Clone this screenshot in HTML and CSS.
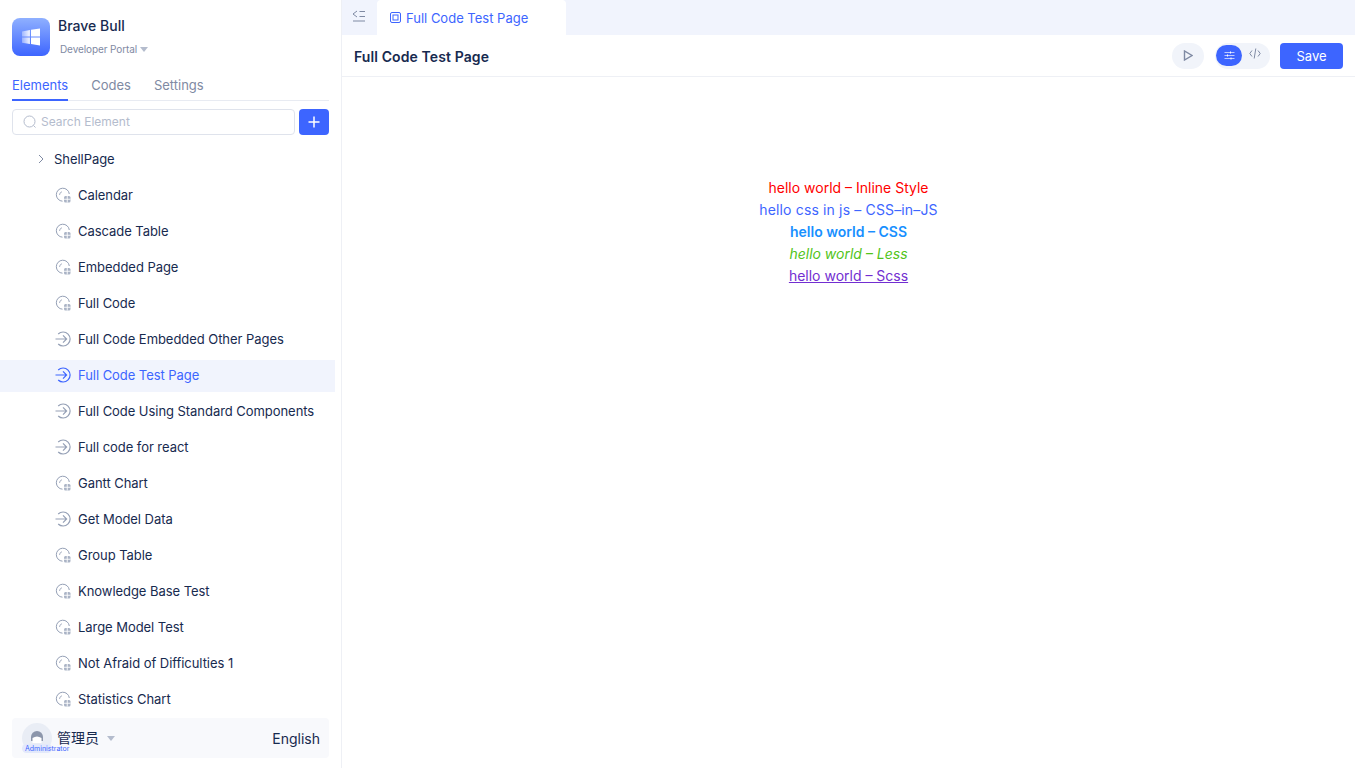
FILE: index.html
```html
<!DOCTYPE html>
<html lang="en">
<head>
    <meta charset="UTF-8">
    <title>Full Code Test Page</title>
    <link rel="stylesheet" href="styles.css">
</head>
<body>
<svg class="defs" width="0" height="0">
    <symbol id="i-page" viewBox="0 0 16 16">
        <path d="M7.500 14.200A6.500 6.500 0 1 1 14.300 7" fill="none" stroke="currentColor"/>
        <path d="M4.500 8A3.500 3.500 0 0 1 7 4.700" fill="none" stroke="currentColor" stroke-width=".8"/>
        <rect x="9" y="9" width="6.500" height="6.500" rx="1.500" fill="currentColor" opacity=".8"/>
        <path d="M12.250 9v6.500M9 12.250h6.500" stroke="#fff" stroke-width=".9"/>
    </symbol>
    <symbol id="i-arrow" viewBox="0 0 16 16">
        <path d="M3.200 3A7 7 0 1 1 3.200 13" fill="none" stroke="currentColor" stroke-width="1.200"/>
        <path d="M.5 8h11M8 4.400 11.600 8 8 11.600" fill="none" stroke="currentColor" stroke-width="1.200"/>
    </symbol>
</svg>

<div class="app">
    <aside class="sidebar">
        <div class="brand">
            <div class="logo">
                <svg width="20" height="20" viewBox="0 0 20 20">
                    <path d="M1 4.400 8.900 3v6.400H1zM10 2.800 19 1.500v7.900h-9zM1 10.500h7.900V17L1 15.700zM10 10.500h9v8l-9-1.400z" fill="url(#win)"/>
                    <defs>
                        <linearGradient id="win" x1="0" x2="1" y1="0" y2="0">
                            <stop offset="0" stop-color="#fff" stop-opacity=".35"/>
                            <stop offset=".5" stop-color="#fff"/>
                        </linearGradient>
                    </defs>
                </svg>
            </div>
            <div class="brand-text">
                <div class="brand-name">Brave Bull</div>
                <div class="brand-sub">Developer Portal <span class="caret"></span></div>
            </div>
        </div>

        <div class="tabs">
            <span class="tab active">Elements</span>
            <span class="tab">Codes</span>
            <span class="tab">Settings</span>
        </div>

        <div class="search-row">
            <div class="search">
                <svg width="14" height="14" viewBox="0 0 14 14"><circle cx="6.500" cy="6.500" r="5.500" fill="none" stroke="#b4bccd"/><path d="m10.500 10.500 2 2" stroke="#b4bccd"/></svg>
                <span>Search Element</span>
            </div>
            <button class="add-btn">
                <svg width="12" height="12" viewBox="0 0 12 12"><path d="M6 .5v11M.5 6h11" stroke="#fff" stroke-width="1.500"/></svg>
            </button>
        </div>

        <div class="tree">
            <div class="row folder">
                <svg class="chevron" width="8" height="10" viewBox="0 0 8 10"><path d="m2 1 4 4-4 4" fill="none" stroke="#7f8aa3"/></svg>
                ShellPage
            </div>
            <div class="row"><svg class="ico"><use href="#i-page"/></svg>Calendar</div>
            <div class="row"><svg class="ico"><use href="#i-page"/></svg>Cascade Table</div>
            <div class="row"><svg class="ico"><use href="#i-page"/></svg>Embedded Page</div>
            <div class="row"><svg class="ico"><use href="#i-page"/></svg>Full Code</div>
            <div class="row"><svg class="ico"><use href="#i-arrow"/></svg>Full Code Embedded Other Pages</div>
            <div class="row selected"><svg class="ico"><use href="#i-arrow"/></svg>Full Code Test Page</div>
            <div class="row"><svg class="ico"><use href="#i-arrow"/></svg>Full Code Using Standard Components</div>
            <div class="row"><svg class="ico"><use href="#i-arrow"/></svg>Full code for react</div>
            <div class="row"><svg class="ico"><use href="#i-page"/></svg>Gantt Chart</div>
            <div class="row"><svg class="ico"><use href="#i-arrow"/></svg>Get Model Data</div>
            <div class="row"><svg class="ico"><use href="#i-page"/></svg>Group Table</div>
            <div class="row"><svg class="ico"><use href="#i-page"/></svg>Knowledge Base Test</div>
            <div class="row"><svg class="ico"><use href="#i-page"/></svg>Large Model Test</div>
            <div class="row"><svg class="ico"><use href="#i-page"/></svg>Not Afraid of Difficulties 1</div>
            <div class="row"><svg class="ico"><use href="#i-page"/></svg>Statistics Chart</div>
        </div>

        <div class="footer">
            <div class="user">
                <div class="avatar">
                    <svg width="30" height="30" viewBox="0 0 30 30">
                        <circle cx="15" cy="15" r="15" fill="#e9edf5"/>
                        <path d="M9 18v-4a6 6 0 0 1 12 0v4z" fill="#8c96ab"/>
                        <path d="M10.500 20v-5q4.500-3 9 0v5z" fill="#fff"/>
                    </svg>
                    <span class="role">Administrator</span>
                </div>
                <span class="user-name">管理员</span>
                <span class="caret"></span>
            </div>
            <span class="lang">English</span>
        </div>
    </aside>

    <main class="main">
        <div class="tabbar">
            <svg class="collapse" width="14" height="12" viewBox="0 0 14 12">
                <path d="M5 1 1 4l4 3" fill="none" stroke="#7f8aa3"/>
                <path d="M7.500 1.500H13M7.500 6.500H13M1 11h12" stroke="#7f8aa3"/>
            </svg>
            <div class="page-tab">
                <svg width="11" height="11" viewBox="0 0 11 11">
                    <rect x=".5" y=".5" width="10" height="10" rx="1.500" fill="none" stroke="#3d65ff"/>
                    <rect x="3" y="3" width="5" height="5" fill="none" stroke="#3d65ff"/>
                </svg>
                Full Code Test Page
            </div>
        </div>

        <div class="toolbar">
            <h1>Full Code Test Page</h1>
            <div class="actions">
                <span class="play">
                    <svg width="10" height="11" viewBox="0 0 10 11"><path d="M1.500 1v9L9 5.500z" fill="none" stroke="#7f8aa3" stroke-width="1.400"/></svg>
                </span>
                <span class="switch">
                    <span class="switch-item on">
                        <svg width="11" height="11" viewBox="0 0 11 11"><path d="M.5 2.500h10M.5 5.500h10M.5 8.500h10" stroke="#dfe5ff" stroke-width=".8"/><path d="M6.500 1.500v2M3.500 4.500v2M7 7.500v2" stroke="#fff"/></svg>
                    </span>
                    <span class="switch-item code">
                        <svg width="12" height="11" viewBox="0 0 12 11"><path d="M3 2.500.8 5.500 3 8.500M9 2.500l2.200 3-2.200 3M6.800 .5l-1.600 10" fill="none" stroke="#7f8aa3"/></svg>
                    </span>
                </span>
                <button class="save">Save</button>
            </div>
        </div>

        <div class="canvas">
            <div class="hello-inline">hello world – Inline Style</div>
            <div class="hello-js">hello css in js – CSS–in–JS</div>
            <div class="hello-css">hello world – CSS</div>
            <div class="hello-less">hello world – Less</div>
            <div class="hello-scss">hello world – Scss</div>
        </div>
    </main>
</div>
</body>
</html>
```

FILE: styles.css
```css
* {
    box-sizing: border-box;
}
body {
    margin: 0;
    font-family: Inter, "Noto Sans CJK SC", sans-serif;
    font-size: 13px;
    color: #172a4f;
    background-color: #fff;
}
.defs {
    position: absolute;
}
.app {
    display: flex;
    height: 768px;
    overflow: hidden;
}

/* sidebar */
.sidebar {
    width: 342px;
    flex-shrink: 0;
    display: flex;
    flex-direction: column;
    border-right: 1px solid #eef0f5;
}
.brand {
    display: flex;
    gap: 8px;
    padding: 18px 12px 0;
}
.logo {
    width: 38px;
    height: 38px;
    border-radius: 8px;
    background: linear-gradient(180deg, #8fb0ff, #3d65ff);
    display: flex;
    align-items: center;
    justify-content: center;
}
.brand-name {
    font-size: 14px;
    font-weight: 500;
    line-height: 16px;
}
.brand-sub {
    margin-top: 8px;
    padding-left: 2px;
    font-size: 10px;
    line-height: 14px;
    letter-spacing: -0.1px;
    color: #7f8aa3;
}
.caret {
    display: inline-block;
    border-left: 4px solid transparent;
    border-right: 4px solid transparent;
    border-top: 5px solid #b4bccd;
    vertical-align: 1px;
}
.tabs {
    display: flex;
    gap: 23px;
    margin: 16px 12px 0;
    border-bottom: 1px solid #e8ebf2;
    height: 29px;
}
.tab {
    height: 29px;
    line-height: 27px;
    color: #7f8aa3;
}
.tab.active {
    color: #3d65ff;
    border-bottom: 2px solid #3d65ff;
}
.search-row {
    display: flex;
    gap: 4px;
    margin: 8px 12px 0;
}
.search {
    flex: 1;
    height: 26px;
    border: 1px solid #dfe3ec;
    border-radius: 4px;
    display: flex;
    align-items: center;
    gap: 4px;
    padding: 0 0 1px 10px;
    font-size: 12px;
    color: #b4bccd;
}
.add-btn {
    width: 30px;
    height: 26px;
    padding: 0;
    border: none;
    border-radius: 4px;
    background-color: #3d65ff;
    display: flex;
    align-items: center;
    justify-content: center;
}
.tree {
    flex: 1;
    width: 335px;
    margin-top: 9px;
    display: flex;
    flex-direction: column;
    gap: 4px;
    overflow: hidden;
}
.row {
    height: 32px;
    flex-shrink: 0;
    display: flex;
    align-items: center;
    padding: 0 0 2px 55px;
    letter-spacing: -0.05px;
    white-space: nowrap;
}
.row.folder {
    padding-left: 37px;
    gap: 9px;
}
.row.selected {
    background-color: #f1f4fd;
    color: #3d65ff;
}
.ico {
    width: 16px;
    height: 16px;
    margin-right: 7px;
    color: #95a0b6;
}
.selected .ico {
    color: #3d65ff;
}
.footer {
    height: 40px;
    margin: 6px 12px 10px;
    padding: 0 9px 0 10px;
    border-radius: 4px;
    background-color: #f8f9fc;
    display: flex;
    align-items: center;
    justify-content: space-between;
}
.user {
    display: flex;
    align-items: center;
}
.avatar {
    position: relative;
    width: 30px;
    height: 30px;
    margin-right: 5px;
}
.avatar::before {
    content: "";
    position: absolute;
    left: 0;
    bottom: 0;
    width: 30px;
    height: 9px;
    border-radius: 5px;
    background-color: #e3e9fb;
}
.role {
    position: absolute;
    left: 3px;
    bottom: 1px;
    font-size: 7px;
    line-height: 7px;
    color: #3d65ff;
}
.user-name {
    font-size: 14px;
    line-height: 14px;
    margin: 0 8px 1px 0;
}
.lang {
    font-size: 14px;
}

/* main */
.main {
    flex: 1;
    min-width: 0;
    display: flex;
    flex-direction: column;
}
.tabbar {
    height: 35px;
    background-color: #f1f4fd;
    display: flex;
    align-items: flex-end;
    padding-left: 10px;
}
.collapse {
    margin: 0 11px 13px 0;
}
.page-tab {
    width: 189px;
    height: 35px;
    margin-top: 1px;
    border-radius: 4px 4px 0 0;
    background-color: #fff;
    color: #3d65ff;
    display: flex;
    align-items: center;
    gap: 5px;
    padding-left: 13px;
}
.toolbar {
    height: 42px;
    display: flex;
    align-items: center;
    justify-content: space-between;
    padding: 0 12px;
    border-bottom: 1px solid #eef0f5;
}
.toolbar h1 {
    margin: 1px 0 0;
    font-size: 14px;
    font-weight: 600;
    letter-spacing: 0.1px;
}
.actions {
    display: flex;
    align-items: center;
}
.play {
    width: 32px;
    height: 26px;
    border-radius: 13px;
    background-color: #f1f4fa;
    display: flex;
    align-items: center;
    justify-content: center;
    margin-right: 11px;
}
.switch {
    display: flex;
    width: 55px;
    height: 26px;
    padding: 2px 1px;
    border-radius: 13px;
    background-color: #f1f4fa;
    margin-right: 10px;
}
.switch-item {
    width: 26px;
    height: 21px;
    border-radius: 11px;
    display: flex;
    align-items: center;
    justify-content: center;
}
.switch-item.on {
    background-color: #3d65ff;
}
.switch-item.code {
    padding-bottom: 3px;
}
.save {
    width: 63px;
    height: 26px;
    border: none;
    border-radius: 4px;
    background-color: #3d65ff;
    color: #fff;
    font-family: inherit;
    font-size: 13px;
}
.canvas {
    flex: 1;
    padding-top: 100px;
    text-align: center;
    font-size: 14px;
    line-height: 22px;
}
.hello-inline {
    color: red;
}
.hello-js {
    color: #3d65ff;
    letter-spacing: 0.15px;
}
.hello-css {
    color: #1890ff;
    font-weight: 600;
}
.hello-less {
    color: #52c41a;
    font-style: italic;
}
.hello-scss {
    color: #722ed1;
    text-decoration: underline;
}
```
